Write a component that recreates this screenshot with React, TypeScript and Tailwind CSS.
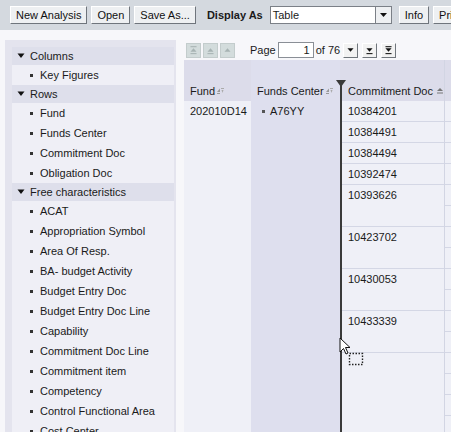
import React from 'react';

function ToolButton({ label }: { label: string }) {
  return (
    <div className="shrink-0 h-[18px] px-[5px] flex items-center bg-[#eef0f2] border border-t-white border-l-white border-b-[#6f757c] border-r-[#6f757c] text-[#111]">
      {label}
    </div>
  );
}

function Tri({ down = true, color = '#111' }: { down?: boolean; color?: string }) {
  return down ? (
    <polygon points="4,5 11,5 7.5,9" fill={color} />
  ) : (
    <polygon points="4,9 11,9 7.5,5" fill={color} />
  );
}

function PagerButton({ kind, disabled }: { kind: number; disabled?: boolean }) {
  const c = disabled ? '#a7b3b3' : '#111';
  return (
    <div
      className={`shrink-0 w-[15px] h-[15px] border ${
        disabled
          ? 'bg-[#d3dcdc] border-[#c3cccc]'
          : 'bg-[#f2f2f2] border-t-[#fff] border-l-[#fff] border-b-[#70767c] border-r-[#70767c]'
      }`}
    >
      <svg width="13" height="13" viewBox="0 0 15 15">
        {kind === 0 && (
          <>
            <rect x="4" y="2.5" width="7" height="1.2" fill={c} />
            <Tri down={false} color={c} />
            <rect x="4" y="10.5" width="7" height="1.2" fill={c} />
          </>
        )}
        {kind === 1 && (
          <>
            <Tri down={false} color={c} />
            <rect x="4" y="10.5" width="7" height="1.2" fill={c} />
          </>
        )}
        {kind === 2 && <Tri down={false} color={c} />}
        {kind === 3 && <Tri color={c} />}
        {kind === 4 && (
          <>
            <Tri color={c} />
            <rect x="4" y="10.5" width="7" height="1.2" fill={c} />
          </>
        )}
        {kind === 5 && (
          <>
            <rect x="4" y="2.5" width="7" height="1.2" fill={c} />
            <Tri color={c} />
            <rect x="4" y="10.5" width="7" height="1.2" fill={c} />
          </>
        )}
      </svg>
    </div>
  );
}

function SortIcon() {
  return (
    <svg width="8" height="8" viewBox="0 0 8 8" className="ml-[1px] mb-[3px]">
      <polygon points="1,5 4,1.5 4,5" fill="#999" />
      <rect x="1" y="6" width="3" height="1" fill="#999" />
      <rect x="5" y="1" width="3" height="1" fill="#aaa" />
      <polygon points="5.5,3 7.5,3 6.5,6" fill="#aaa" />
    </svg>
  );
}

function Header({ label }: { label: string }) {
  return (
    <div className="h-[18px] flex items-center bg-[#dedfeb] pl-[5px]">
      <svg width="8" height="6" viewBox="0 0 8 6" className="mr-[5px]">
        <polygon points="0.5,0.5 7.5,0.5 4,5" fill="#111" />
      </svg>
      {label}
    </div>
  );
}

function Item({ label }: { label: string }) {
  return (
    <div className="h-[20px] flex items-center pl-[18px]">
      <span className="w-[3px] h-[3px] bg-[#333] mr-[7px]" />
      {label}
    </div>
  );
}

const free = [
  'ACAT',
  'Appropriation Symbol',
  'Area Of Resp.',
  'BA- budget Activity',
  'Budget Entry Doc',
  'Budget Entry Doc Line',
  'Capability',
  'Commitment Doc Line',
  'Commitment item',
  'Competency',
  'Control Functional Area',
  'Cost Center',
];

const docs: [string, number][] = [
  ['10384201', 21],
  ['10384491', 21],
  ['10384494', 21],
  ['10392474', 21],
  ['10393626', 42],
  ['10423702', 42],
  ['10430053', 42],
  ['10433339', 42],
];

export default function App() {
  return (
    <div className="w-[451px] h-[432px] overflow-hidden relative bg-[#f7f7fa] text-[11px] leading-[14px] text-[#1a1a1a] font-['Liberation_Sans',Arial,sans-serif]">
      {/* toolbar */}
      <div className="h-[30px] bg-[#d4d9df] flex items-center pl-[10px] gap-[4px] whitespace-nowrap overflow-hidden">
        <ToolButton label="New Analysis" />
        <ToolButton label="Open" />
        <ToolButton label="Save As..." />
        <span className="shrink-0 font-bold ml-[7px] mr-[3px]">Display As</span>
        <div className="shrink-0 w-[122px] h-[18px] bg-white border border-[#7b8087] flex items-center">
          <span className="flex-1 pl-[2px]">Table</span>
          <div className="w-[16px] h-full bg-[#eef0f2] border-l border-[#7b8087] flex items-center justify-center">
            <svg width="7" height="4" viewBox="0 0 7 4">
              <polygon points="0,0 7,0 3.5,4" fill="#111" />
            </svg>
          </div>
        </div>
        <div className="shrink-0 ml-[3px]">
          <ToolButton label="Info" />
        </div>
        <ToolButton label="Print" />
      </div>

      <div className="flex pt-[10px]">
        {/* left panel */}
        <div className="shrink-0 w-[171px] ml-[5px] h-[400px] bg-[#e4e4ee] pt-[7px] pl-[7px] pr-[2px]">
          <div className="bg-[#efeff6] h-full">
            <Header label="Columns" />
            <Item label="Key Figures" />
            <Header label="Rows" />
            <Item label="Fund" />
            <Item label="Funds Center" />
            <Item label="Commitment Doc" />
            <Item label="Obligation Doc" />
            <Header label="Free characteristics" />
            {free.map((f) => (
              <Item key={f} label={f} />
            ))}
          </div>
        </div>

        {/* right area */}
        <div className="flex-1 ml-[8px] flex flex-col">
          <div className="h-[20px] flex items-center gap-[2px] pl-[2px] whitespace-nowrap">
            <PagerButton kind={0} disabled />
            <PagerButton kind={1} disabled />
            <PagerButton kind={2} disabled />
            <span className="ml-[13px]">Page</span>
            <div className="w-[36px] h-[16px] bg-white border border-[#8a8f96] text-right pr-[3px] leading-[14px]">1</div>
            <span className="mr-[1px]">of 76</span>
            <PagerButton kind={3} />
            <div className="ml-[2px]">
              <PagerButton kind={4} />
            </div>
            <div className="ml-[2px]">
              <PagerButton kind={5} />
            </div>
          </div>

          <div className="flex flex-1 relative">
            {/* Fund */}
            <div className="shrink-0 w-[67px] flex flex-col">
              <div className="h-[41px] bg-[#dcdcea] flex items-end pb-[3px] pl-[6px]">
                Fund
                <SortIcon />
              </div>
              <div className="flex-1 bg-[#eff0f7] pl-[6px] pt-[3px]">202010D14</div>
            </div>
            {/* Funds Center */}
            <div className="shrink-0 w-[89px] flex flex-col bg-[#dedfee]">
              <div className="h-[41px] flex items-end pb-[3px] pl-[6px]">
                Funds Center
                <SortIcon />
              </div>
              <div className="flex items-center pl-[11px] pt-[3px]">
                <span className="w-[3px] h-[3px] bg-[#555] mr-[5px]" />
                A76YY
              </div>
            </div>
            {/* divider */}
            <div className="shrink-0 w-[2px] flex flex-col bg-[#dcdcea]">
              <div className="h-[20px]" />
              <div className="flex-1 bg-[#3a3a3a] relative">
                <svg width="10" height="7" viewBox="0 0 10 7" className="absolute left-[-4px] top-0">
                  <polygon points="0,0 10,0 5,7" fill="#3a3a3a" />
                </svg>
              </div>
            </div>
            {/* Commitment Doc */}
            <div className="shrink-0 w-[103px] flex flex-col border-r border-[#d2d5e3]">
              <div className="h-[41px] bg-[#dcdcea] flex items-end pb-[3px] pl-[6px] whitespace-nowrap">
                Commitment Doc
                <svg width="8" height="8" viewBox="0 0 8 8" className="ml-[3px] mb-[3px]">
                  <polygon points="1,4 4,1 7,4" fill="#777" />
                  <rect x="1" y="5.5" width="6" height="1" fill="#777" />
                </svg>
              </div>
              {docs.map(([d, h]) => (
                <div
                  key={d}
                  style={{ height: h }}
                  className="bg-[#eff0f7] border-b border-[#d4d7e5] pl-[6px] pt-[3px] shrink-0"
                >
                  {d}
                </div>
              ))}
              <div className="flex-1 bg-[#eff0f7]" />
            </div>
            {/* next column */}
            <div className="flex-1 flex flex-col">
              <div className="h-[41px] bg-[#dcdcea]" />
              {Array.from({ length: 16 }).map((_, i) => (
                <div key={i} className="h-[21px] shrink-0 bg-[#eff0f7] border-b border-[#d4d7e5]" />
              ))}
            </div>
          </div>
        </div>
      </div>

      {/* drag cursor */}
      <svg width="26" height="30" viewBox="0 0 26 30" className="absolute left-[339px] top-[337px]">
        <path d="M1 1 L1 15 L4.5 11.5 L7 17 L9 16 L6.5 10.5 L11 10.5 Z" fill="#fff" stroke="#111" strokeWidth="1" />
        <rect x="10.5" y="16.5" width="13" height="11" fill="none" stroke="#222" strokeWidth="1.4" strokeDasharray="1.5 1.5" />
      </svg>
    </div>
  );
}
